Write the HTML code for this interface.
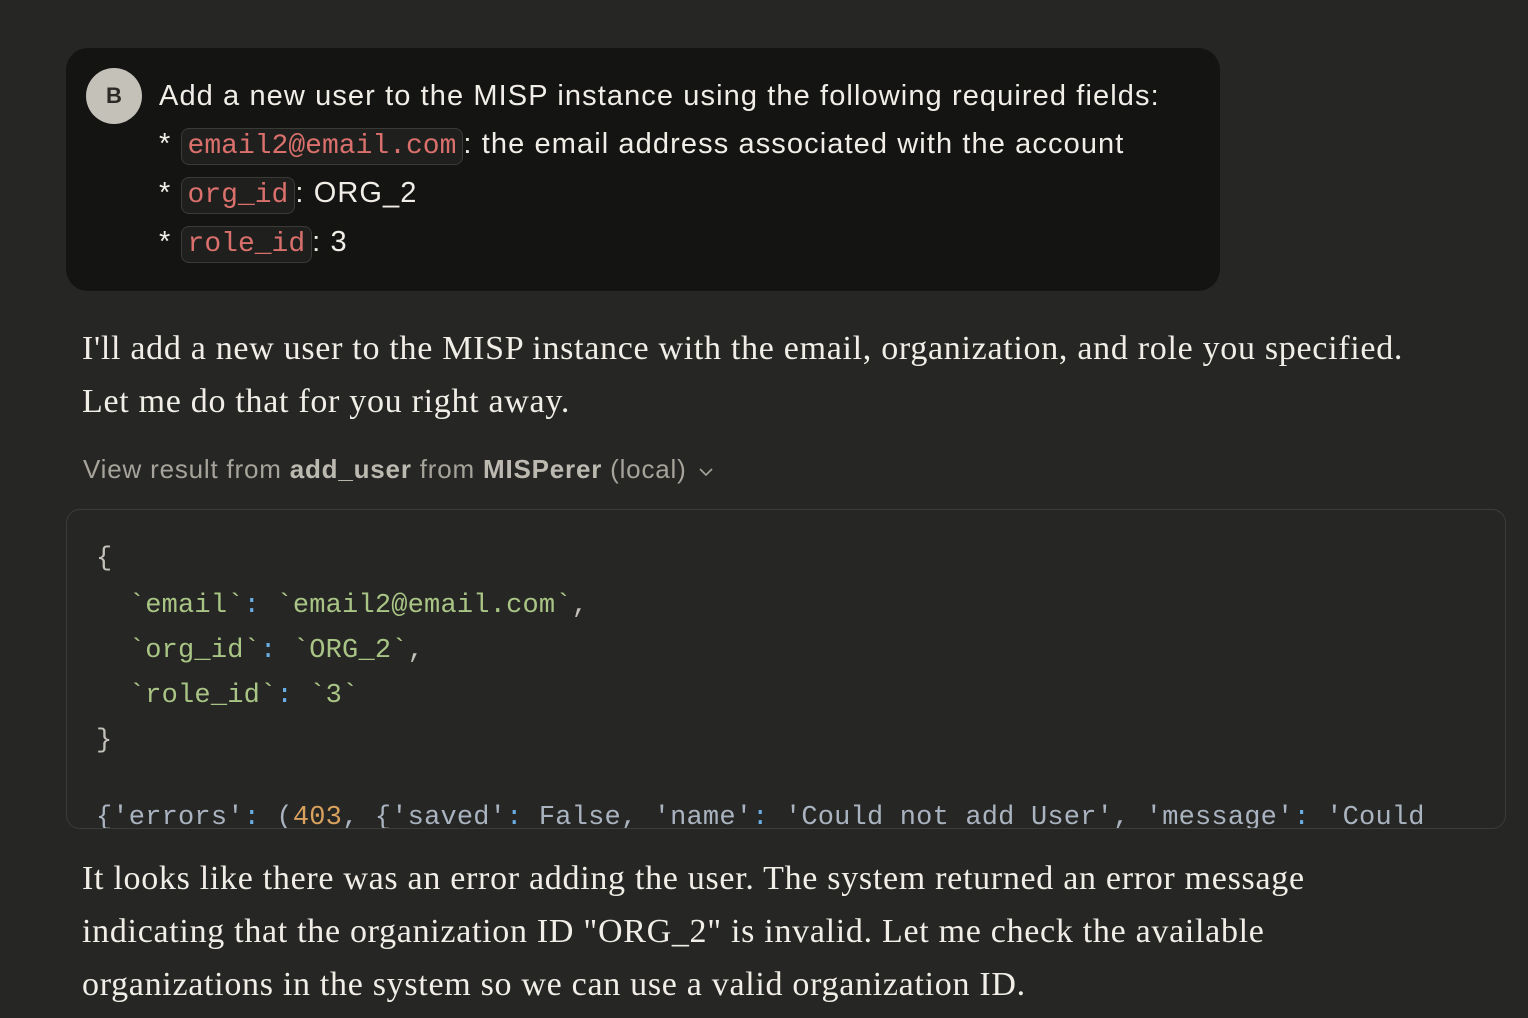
<!DOCTYPE html>
<html><head><meta charset="utf-8"><style>
html,body{margin:0;padding:0;background:#262624;width:1528px;height:1018px;overflow:hidden}
body{position:relative;font-family:"Liberation Sans",sans-serif;color:#f0eee6}
.card{position:absolute;left:66px;top:48px;width:1154px;height:243px;background:#141413;border-radius:22px}
.av{position:absolute;left:86px;top:68px;width:56px;height:56px;border-radius:50%;background:#c4c1b8;color:#2b2a27;font-weight:bold;font-size:22px;text-align:center;line-height:56px}
.u{position:absolute;left:159px;font-size:29px;letter-spacing:1.1px;white-space:nowrap}
.c{font-family:"Liberation Mono",monospace;color:#d9706c;background:#1f1f1e;border:1px solid #3a3a37;border-radius:8px;padding:2px 6px;font-size:28px;letter-spacing:0}
.p{position:absolute;left:82px;font-family:"Liberation Serif",serif;font-size:34px;letter-spacing:0.7px;line-height:53px;color:#f0eee6;white-space:nowrap}
.v{position:absolute;left:83px;top:454px;font-size:26px;letter-spacing:0.8px;color:#a6a39a;white-space:nowrap}
.v b{color:#bcb9b0}
.box{position:absolute;left:66px;top:509px;width:1438px;height:318px;border:1px solid #3c3c3a;border-radius:14px;overflow:hidden;background:#262624}
.code{position:absolute;left:29px;font-family:"Liberation Mono",monospace;font-size:27px;letter-spacing:0.2px;color:#c2c0b8;white-space:pre}
.g{color:#a9c585}.bl{color:#6aaee6}.o{color:#d9a15e}.w{color:#aab3c0}
</style></head><body>
<div class="card"></div>
<div class="av">B</div>
<div class="u" style="top:80px">Add a new user to the MISP instance using the following required fields:</div>
<div class="u" style="top:128px">* <span class="c">email2@email.com</span>: the email address associated with the account</div>
<div class="u" style="top:177px">* <span class="c">org_id</span>: ORG_2</div>
<div class="u" style="top:226px">* <span class="c">role_id</span>: 3</div>
<div class="p" style="top:322px">I'll add a new user to the MISP instance with the email, organization, and role you specified.<br>Let me do that for you right away.</div>
<div class="v">View result from <b>add_user</b> from <b>MISPerer</b> (local) <svg width="18" height="12" viewBox="0 0 18 12" style="margin-left:2px"><path d="M3 3l6 6 6-6" fill="none" stroke="#a6a39a" stroke-width="1.6"/></svg></div>
<div class="box">
<div class="code" style="top:34px">{</div>
<div class="code g" style="top:81px">  `email`<span class="bl">:</span> `email2@email.com`<span style="color:#c2c0b8">,</span></div>
<div class="code g" style="top:126px">  `org_id`<span class="bl">:</span> `ORG_2`<span style="color:#c2c0b8">,</span></div>
<div class="code g" style="top:171px">  `role_id`<span class="bl">:</span> `3`</div>
<div class="code" style="top:216px">}</div>
<div class="code w" style="top:293px">{'errors'<span class="bl">:</span> (<span class="o">403</span>, {'saved'<span class="bl">:</span> False, 'name'<span class="bl">:</span> 'Could not add User', 'message'<span class="bl">:</span> 'Could</div>
</div>
<div class="p" style="top:852px">It looks like there was an error adding the user. The system returned an error message<br>indicating that the organization ID "ORG_2" is invalid. Let me check the available<br>organizations in the system so we can use a valid organization ID.</div>
</body></html>
